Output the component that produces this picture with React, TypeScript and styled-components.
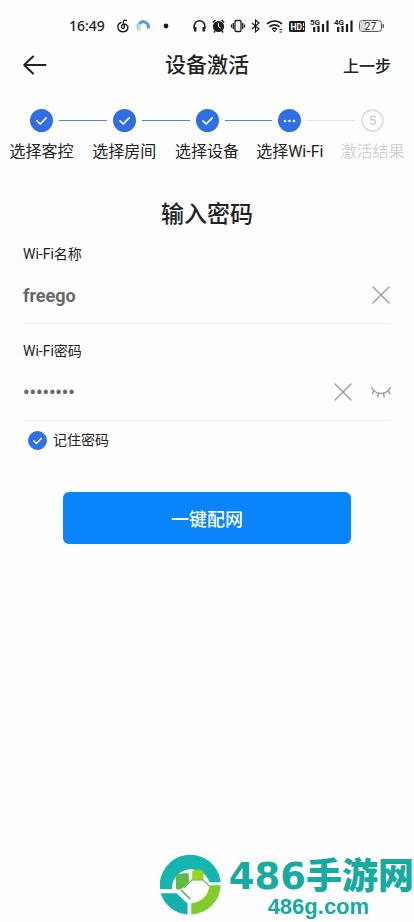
import React, { useState } from "react";
import styled, { createGlobalStyle } from "styled-components";

const GlobalStyle = createGlobalStyle`
  * { box-sizing: border-box; }
  body { margin: 0; background: #fefefe; color: #222; font-family: Roboto, "Noto Sans CJK SC", sans-serif; }
  button, input { font: inherit; color: inherit; }
`;

const Page = styled.div`
  min-height: 100vh;
  display: flex;
  flex-direction: column;
`;

const StatusBar = styled.div`
  display: flex;
  justify-content: space-between;
  align-items: center;
  height: 38px;
  padding: 14px 30px 0 69px;
  color: #1c1c1c;
  svg { display: block; overflow: visible; }
`;

const StatusGroup = styled.div<{ $gap: number }>`
  display: flex;
  align-items: center;
  gap: ${(p) => p.$gap}px;
`;

const Time = styled.time`
  font-family: "Noto Sans", sans-serif;
  font-size: 14px;
  line-height: 20px;
  font-weight: 500;
  margin-right: 4px;
`;

const Header = styled.header`
  display: grid;
  grid-template-columns: 1fr auto 1fr;
  align-items: center;
  height: 54px;
  padding: 0 23px;
`;

const PlainButton = styled.button`
  display: flex;
  align-items: center;
  padding: 0;
  border: 0;
  background: none;
  font-size: 16px;
  font-weight: 500;
  cursor: pointer;
  &:last-child { justify-self: end; }
  svg { display: block; }
`;

const Title = styled.h1`
  margin: 0;
  font-size: 21px;
  line-height: 28px;
  font-weight: 500;
`;

const Steps = styled.ol`
  display: grid;
  grid-template-columns: repeat(5, 1fr);
  margin: 0;
  padding: 17px 0 0;
  list-style: none;
`;

const Step = styled.li<{ $pending?: boolean }>`
  display: flex;
  flex-direction: column;
  gap: 8px;
  font-size: 16px;
  line-height: 24px;
  white-space: nowrap;
  text-align: center;
  color: ${(p) => (p.$pending ? "#d2d2d2" : "#222")};
`;

const Track = styled.div`
  display: flex;
  align-items: center;
  gap: 6px;
`;

const Rail = styled.span<{ $tone: "done" | "pending" | "none" }>`
  flex: 1;
  height: 1px;
  background: ${(p) => ({ done: "#5583d3", pending: "#e2e2e2", none: "transparent" })[p.$tone]};
`;

const Badge = styled.span<{ $pending?: boolean }>`
  display: flex;
  align-items: center;
  justify-content: center;
  width: 23px;
  height: 23px;
  border-radius: 50%;
  border: 2px solid ${(p) => (p.$pending ? "#e0e0e0" : "#2f6ee5")};
  background: ${(p) => (p.$pending ? "#fefefe" : "#2f6ee5")};
  color: ${(p) => (p.$pending ? "#cfcfcf" : "#fff")};
  font-size: 13px;
  line-height: 16px;
  font-weight: 500;
`;

const Form = styled.form`
  display: flex;
  flex-direction: column;
  padding: 39px 23px 0;
`;

const FormTitle = styled.h2`
  margin: 0;
  text-align: center;
  font-size: 23px;
  line-height: 24px;
  font-weight: 500;
`;

const Field = styled.div`
  display: flex;
  flex-direction: column;
  height: 97px;
  padding-top: 17px;
  border-bottom: 1px solid #f0f0f0;
`;

const Label = styled.label`
  font-size: 14px;
  line-height: 20px;
`;

const InputRow = styled.div`
  display: flex;
  align-items: center;
  gap: 18px;
  padding-top: 4px;
  height: 58px;
`;

const TextInput = styled.input`
  flex: 1;
  min-width: 0;
  height: 32px;
  padding: 0;
  border: 0;
  outline: 0;
  background: transparent;
  color: #686868;
  font-size: 18px;
  font-weight: 700;
`;

const Remember = styled.label`
  display: flex;
  align-items: center;
  gap: 6px;
  align-self: flex-start;
  padding: 9px 0 0 5px;
  font-size: 14px;
  line-height: 20px;
  cursor: pointer;
`;

const CheckCell = styled.span`
  display: grid;
  place-items: center;
  > * { grid-area: 1 / 1; }
  svg { pointer-events: none; }
`;

const CheckInput = styled.input`
  appearance: none;
  width: 19px;
  height: 19px;
  margin: 0;
  border: 1px solid #2f6ee5;
  border-radius: 50%;
  &:checked { background: #2f6ee5; }
`;

const Submit = styled.button`
  height: 52px;
  margin: 42px 40px 0;
  border: 0;
  border-radius: 6px;
  background: #0a84fb;
  color: #fff;
  font-size: 18px;
  font-weight: 500;
  cursor: pointer;
`;

const Brand = styled.footer`
  display: flex;
  align-items: center;
  justify-content: flex-end;
  gap: 8px;
  margin-top: auto;
  height: 77px;
  white-space: nowrap;
  color: #16aaa0;
  svg { flex: none; }
`;

const BrandText = styled.div`
  display: flex;
  flex-direction: column;
  align-items: center;
  gap: 5px;
  padding-top: 6px;
`;

const BrandName = styled.strong`
  display: flex;
  align-items: baseline;
  height: 36px;
  font: 900 36px/36px "Noto Sans CJK SC", sans-serif;
`;

const BrandDigits = styled.span`
  font: 700 37px/36px "DejaVu Sans", sans-serif;
`;

const BrandSite = styled.span`
  padding-right: 6px;
  font: 700 22px/22px "Liberation Sans", sans-serif;
`;

const Check = ({ size = 13 }: { size?: number }) => (
  <svg width={size} height={size} viewBox="0 0 13 13" fill="none" stroke="#fff" strokeWidth="1.7" strokeLinecap="round" strokeLinejoin="round" aria-hidden="true">
    <path d="M2 6.8 5.2 10 11.2 3.8" />
  </svg>
);

const Cross = () => (
  <svg width="20" height="20" viewBox="0 0 20 20" fill="none" stroke="#999" strokeWidth="1.3" strokeLinecap="round" aria-hidden="true">
    <path d="M2 2 18 18M18 2 2 18" />
  </svg>
);

const ClosedEye = () => (
  <svg width="20" height="20" viewBox="0 0 20 20" fill="none" stroke="#999" strokeWidth="1.4" strokeLinecap="round" aria-hidden="true">
    <path d="M.5 5.5C5 13.5 15 13.5 19.5 5.5M3 8.5 1.3 11.8M7.5 11.3 6.8 14.8M12.5 11.3 13.2 14.8M17 8.5 18.7 11.8" />
  </svg>
);

const Signal = ({ kind }: { kind: string }) => (
  <svg width="18" height="14" viewBox="0 0 18 14" aria-hidden="true">
    <text x="-1" y="5.8" fontSize="8" fontWeight="700" fontFamily="Roboto" fill="currentColor">{kind}</text>
    <path d="M3.2 13V8M7.5 13V7M12 13V5M16.5 13V1.5" stroke="currentColor" strokeWidth="2.2" />
  </svg>
);

const StatusIcons = () => (
  <StatusGroup $gap={6}>
    <svg width="13" height="14" viewBox="0 0 13 14" fill="none" stroke="currentColor" strokeWidth="1.6">
      <path d="M1.2 10V7a5.3 5.3 0 0 1 10.6 0v3" />
      <path d="M2.2 8v4.5M10.8 8v4.5" strokeWidth="2.5" />
    </svg>
    <svg width="13" height="14" viewBox="0 0 13 14">
      <circle cx="6.5" cy="7.5" r="5.6" fill="currentColor" />
      <path d="M.8 3.5 3.5 1M9.5 1l2.7 2.5M3 12l-1 1.5M10 12l1 1.5" stroke="currentColor" strokeWidth="1.5" />
      <path d="M6.5 4.2v3.5l2.3 1.4" stroke="#fff" fill="none" />
    </svg>
    <svg width="14" height="14" viewBox="0 0 14 14" fill="none" stroke="currentColor" strokeWidth="1.3">
      <rect x="4" y="1.5" width="6" height="11" rx="1" />
      <path d="M2.3 4v6M11.7 4v6M.5 5.5v3M13.5 5.5v3" />
    </svg>
    <svg width="9" height="14" viewBox="0 0 9 14" fill="none" stroke="currentColor" strokeWidth="1.2">
      <path d="m1 4 7 6-3.5 3V1L8 4l-7 6" />
    </svg>
    <svg width="17" height="14" viewBox="0 0 17 14" fill="none" stroke="currentColor" strokeWidth="1.7">
      <path d="M1 5c4.2-4 10.8-4 15 0M3.5 7.8c2.8-2.6 7.2-2.6 10 0M6 10.3c1.5-1.3 3.5-1.3 5 0" />
      <path d="M7 11.5h3L8.5 13z" fill="currentColor" strokeWidth=".5" />
      <path d="M13.5 10.5h2.5M13.5 13h2.5" strokeWidth="1.2" />
    </svg>
    <svg width="16" height="14" viewBox="0 0 16 14">
      <rect y="2" width="16" height="11" rx="1.5" fill="currentColor" />
      <text x="1.5" y="10.8" fontSize="8.5" fontWeight="700" fontFamily="Roboto" fill="#fff">HD</text>
      <path d="M14.5 4v3M14.5 8.5v2.5" stroke="#fff" />
    </svg>
    <Signal kind="5G" />
    <Signal kind="4G" />
    <svg width="25" height="14" viewBox="0 0 25 14">
      <rect x=".5" y="1.5" width="22" height="11" rx="3" fill="#fff" stroke="#555" />
      <path d="M3 2h4v10H3a2 2 0 0 1-2-2V4a2 2 0 0 1 2-2" fill="#d8d8d8" />
      <path d="M24.2 5v4" stroke="#555" strokeWidth="1.3" />
      <text x="11.5" y="10.8" textAnchor="middle" fontSize="10.5" fontFamily="Roboto" fill="#222">27</text>
    </svg>
  </StatusGroup>
);

const BrandMark = () => (
  <svg width="61" height="62" viewBox="30 25 184 186" aria-hidden="true">
    <path d="M30 134a92 92 0 0 1 183-24l1 3h-35a58 58 0 0 0-113 21z" fill="#16b5ae" />
    <path d="M32 146h48l33 31v33a92 92 0 0 1-81-64" fill="#16b0ac" />
    <path d="M124 210v-34a58 58 0 0 0 55-54h34a91 91 0 0 1-89 88" fill="#80cc2a" />
    <path d="m84 88 25-3q8 0 8 7v20l-17 18-15 5q-7 0-7-6V96q0-7 6-8" fill="#62b846" />
    <path d="M133 75h19q9 3 9 10v20h-34V85q0-8 6-10" fill="#98d51c" />
    <path d="m93 136 28 27" fill="none" stroke="#4ba850" strokeWidth="4" />
    <path d="M103 130l23-24h34l18 18" fill="none" stroke="#6ebd45" strokeWidth="4" />
    <path d="m104 132 23-24h32l17 17q0 34-28 43l-23 4v-9z" fill="#fefefe" />
  </svg>
);

const steps = ["选择客控", "选择房间", "选择设备", "选择Wi-Fi", "激活结果"];

export default function App() {
  const [name, setName] = useState("freego");
  const [password, setPassword] = useState("12345678");
  const [visible, setVisible] = useState(false);
  const [remember, setRemember] = useState(true);

  return (
    <Page>
      <GlobalStyle />
      <StatusBar>
        <StatusGroup $gap={8}>
          <Time>16:49</Time>
          <svg width="12" height="14" viewBox="0 0 12 14" fill="none" stroke="currentColor" strokeWidth="1.4" strokeLinecap="round">
            <path d="M9.5 1.5C7.5.5 6 1.5 6.4 3.3l1.1 4.4c.4 2-2.8 2.4-3 .3C4.3 5.5 7 4.5 9 5.5c3 1.7 2.5 7.3-3 7.3C-.2 12.8-.5 5 4 3.5" />
          </svg>
          <svg width="13" height="14" viewBox="0 0 13 14" fill="none" strokeWidth="3">
            <path d="M2.5 11a5 5 0 1 1 8.5-1.5" stroke="#4fa6c9" />
            <path d="M2.5 11a5 5 0 0 1 0-6" stroke="#a5deee" />
          </svg>
          <svg width="16" height="14" viewBox="0 0 16 14"><circle cx="8" cy="7" r="2.4" fill="currentColor" /></svg>
        </StatusGroup>
        <StatusIcons />
      </StatusBar>

      <Header>
        <PlainButton type="button" aria-label="返回">
          <svg width="24" height="20" viewBox="0 0 24 20" fill="none" stroke="#222" strokeWidth="2" strokeLinecap="round" strokeLinejoin="round">
            <path d="M10 1.5 1.2 10 10 18.5M1.5 10H22.5" />
          </svg>
        </PlainButton>
        <Title>设备激活</Title>
        <PlainButton type="button">上一步</PlainButton>
      </Header>

      <Steps>
        {steps.map((label, i) => (
          <Step key={label} $pending={i === 4}>
            <Track>
              <Rail $tone={i === 0 ? "none" : i === 4 ? "pending" : "done"} />
              <Badge $pending={i === 4}>
                {i < 3 && <Check />}
                {i === 3 && (
                  <svg width="13" height="4" viewBox="0 0 13 4" fill="#fff" aria-hidden="true">
                    <circle cx="2" cy="2" r="1.3" /><circle cx="6.5" cy="2" r="1.3" /><circle cx="11" cy="2" r="1.3" />
                  </svg>
                )}
                {i === 4 && "5"}
              </Badge>
              <Rail $tone={i === 4 ? "none" : i === 3 ? "pending" : "done"} />
            </Track>
            <span>{label}</span>
          </Step>
        ))}
      </Steps>

      <Form onSubmit={(e) => e.preventDefault()}>
        <FormTitle>输入密码</FormTitle>
        <Field>
          <Label htmlFor="wifi-name">Wi-Fi名称</Label>
          <InputRow>
            <TextInput id="wifi-name" value={name} onChange={(e) => setName(e.target.value)} />
            <PlainButton type="button" aria-label="清除名称" onClick={() => setName("")}><Cross /></PlainButton>
          </InputRow>
        </Field>
        <Field>
          <Label htmlFor="wifi-password">Wi-Fi密码</Label>
          <InputRow>
            <TextInput id="wifi-password" type={visible ? "text" : "password"} value={password} onChange={(e) => setPassword(e.target.value)} />
            <PlainButton type="button" aria-label="清除密码" onClick={() => setPassword("")}><Cross /></PlainButton>
            <PlainButton type="button" aria-label="显示密码" onClick={() => setVisible(!visible)}><ClosedEye /></PlainButton>
          </InputRow>
        </Field>
        <Remember>
          <CheckCell>
            <CheckInput type="checkbox" checked={remember} onChange={(e) => setRemember(e.target.checked)} />
            {remember && <Check size={11} />}
          </CheckCell>
          记住密码
        </Remember>
        <Submit type="submit">一键配网</Submit>
      </Form>

      <Brand>
        <BrandMark />
        <BrandText>
          <BrandName><BrandDigits>486</BrandDigits>手游网</BrandName>
          <BrandSite>486g.com</BrandSite>
        </BrandText>
      </Brand>
    </Page>
  );
}
